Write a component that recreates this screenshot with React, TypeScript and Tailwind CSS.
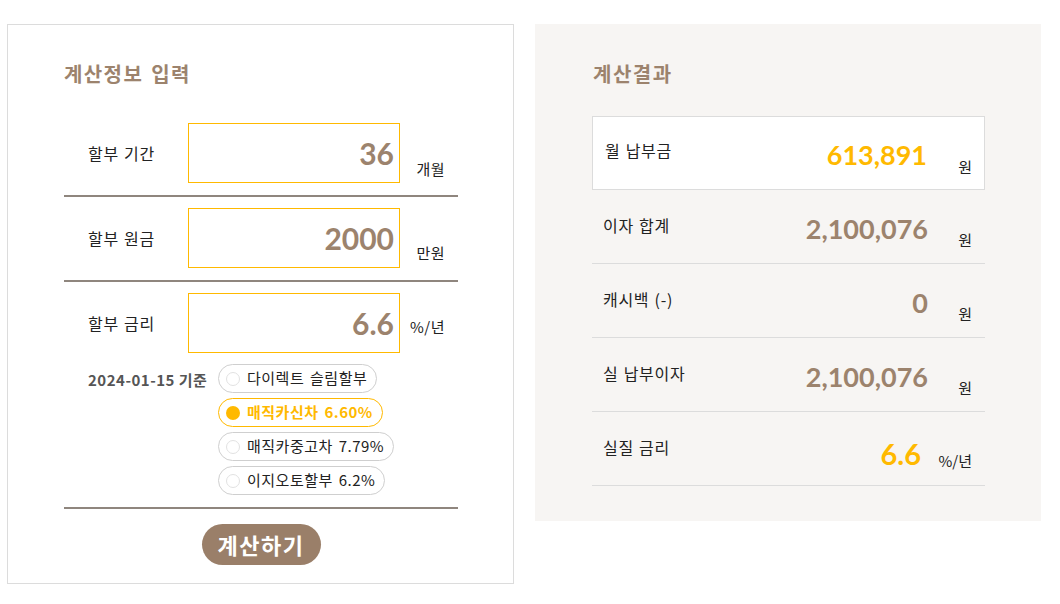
import React from "react";

const ko = { fontFamily: '"Noto Sans CJK KR", "Noto Sans", sans-serif' };
const num = { fontFamily: 'Lato, "Noto Sans", sans-serif' };

const inputs = [
  { label: "할부 기간", value: "36", unit: "개월", unitMb: "mb-[3px]" },
  { label: "할부 원금", value: "2000", unit: "만원", unitMb: "mb-[4px]" },
  { label: "할부 금리", value: "6.6", unit: "%/년", unitMb: "mb-[15px]" },
];

const products = [
  { name: "다이렉트 슬림할부", checked: false },
  { name: "매직카신차 6.60%", checked: true },
  { name: "매직카중고차 7.79%", checked: false },
  { name: "이지오토할부 6.2%", checked: false },
];

const results = [
  { label: "월 납부금", value: "613,891", unit: "원", highlight: true },
  { label: "이자 합계", value: "2,100,076", unit: "원" },
  { label: "캐시백 (-)", value: "0", unit: "원" },
  { label: "실 납부이자", value: "2,100,076", unit: "원" },
  { label: "실질 금리", value: "6.6", unit: "%/년", rate: true },
];

function InputRow({ label, value, unit, unitMb }: { label: string; value: string; unit: string; unitMb: string }) {
  return (
    <div className="flex items-stretch">
      <div className="w-[124px] pl-[24px] flex items-center text-[16px] tracking-[0.7px] [word-spacing:1px] text-[#222]">{label}</div>
      <input
        readOnly
        defaultValue={value}
        style={num}
        className="w-[212px] h-[60px] border border-[#ffb900] bg-white text-right pr-[5px] text-[30px] font-bold text-[#9c836d] outline-none"
      />
      <div className={`w-[45px] self-end text-right text-[15px] tracking-[0.5px] text-[#222] ${unitMb}`}>{unit}</div>
    </div>
  );
}

export default function App() {
  return (
    <div className="w-[1060px] h-[604px] bg-white flex items-start pt-[24px] pl-[7px] gap-[21px]" style={ko}>
      {/* 입력 */}
      <div className="w-[507px] h-[560px] border border-[#dcdcdc] pl-[56px] pr-[55px] pt-[35px]">
        <h2 className="text-[20px] leading-[28px] font-bold tracking-[1.4px] [word-spacing:2px] text-[#9c836d]">계산정보 입력</h2>

        <div className="mt-[24px]">
          {inputs.map((row, i) => (
            <div key={row.label} className="pt-[11px] pb-[12px] border-b-2 border-[#8f867e]">
              <InputRow {...row} />
              {i === 2 && (
                <div className="flex mt-[11px]">
                  <div className="w-[154px] pl-[24px] pt-[5px] text-[15px] font-bold tracking-[0.5px] text-[#555]">2024-01-15 기준</div>
                  <div className="flex flex-col items-start gap-[5px]">
                    {products.map((p) => (
                      <label
                        key={p.name}
                        className={`h-[29px] rounded-full border pl-[7px] pr-[9px] flex items-center gap-[7px] text-[15px] tracking-[0.5px] [word-spacing:2px] ${
                          p.checked ? "border-[#ffb900] text-[#ffb900] font-semibold" : "border-[#cfcfcf] text-[#222]"
                        }`}
                      >
                        <span
                          className={`w-[14px] h-[14px] rounded-full ${
                            p.checked ? "bg-[#ffb900]" : "border border-[#e2e2e2] bg-white"
                          }`}
                        />
                        {p.name}
                      </label>
                    ))}
                  </div>
                </div>
              )}
            </div>
          ))}
        </div>

        <div className="flex justify-center mt-[15px]">
          <button className="w-[119px] h-[41px] rounded-full bg-[#9a7f69] text-white text-[22px] tracking-[1.5px] font-bold">계산하기</button>
        </div>
      </div>

      {/* 결과 */}
      <div className="w-[506px] h-[497px] bg-[#f7f5f3] pl-[57px] pr-[56px] pt-[36px]">
        <h2 className="pl-px text-[20px] leading-[28px] font-bold tracking-[1.5px] text-[#9c836d]">계산결과</h2>

        <div className="mt-[28px]">
          {results.map((r) => (
            <div
              key={r.label}
              className={`h-[74px] flex items-start ${
                r.highlight ? "bg-white border border-[#dcdcdc] pl-[12px] pr-[12px]" : "border-b border-[#dcdcdc] pl-[11px] pr-[13px]"
              }`}
            >
              <div
                className={`flex-1 text-[16px] leading-[22px] tracking-[0.7px] [word-spacing:1px] text-[#222] ${
                  r.highlight ? "mt-[22px]" : "mt-[24px]"
                }`}
              >
                {r.label}
              </div>
              <div
                style={num}
                className={`text-right font-bold leading-[34px] ${
                  r.highlight || r.rate ? "text-[#ffb900]" : "text-[#9c836d]"
                } ${r.highlight ? "text-[27px] mt-[21px] mr-[1px]" : r.rate ? "text-[29px] mt-[25px] mr-[7px]" : "text-[27px] mt-[22px]"}`}
              >
                {r.value}
              </div>
              <div className={`w-[44px] text-right text-[15px] leading-[22px] text-[#222] ${r.rate ? "mt-[38px]" : "mt-[39px]"}`}>
                {r.unit}
              </div>
            </div>
          ))}
        </div>
      </div>
    </div>
  );
}
